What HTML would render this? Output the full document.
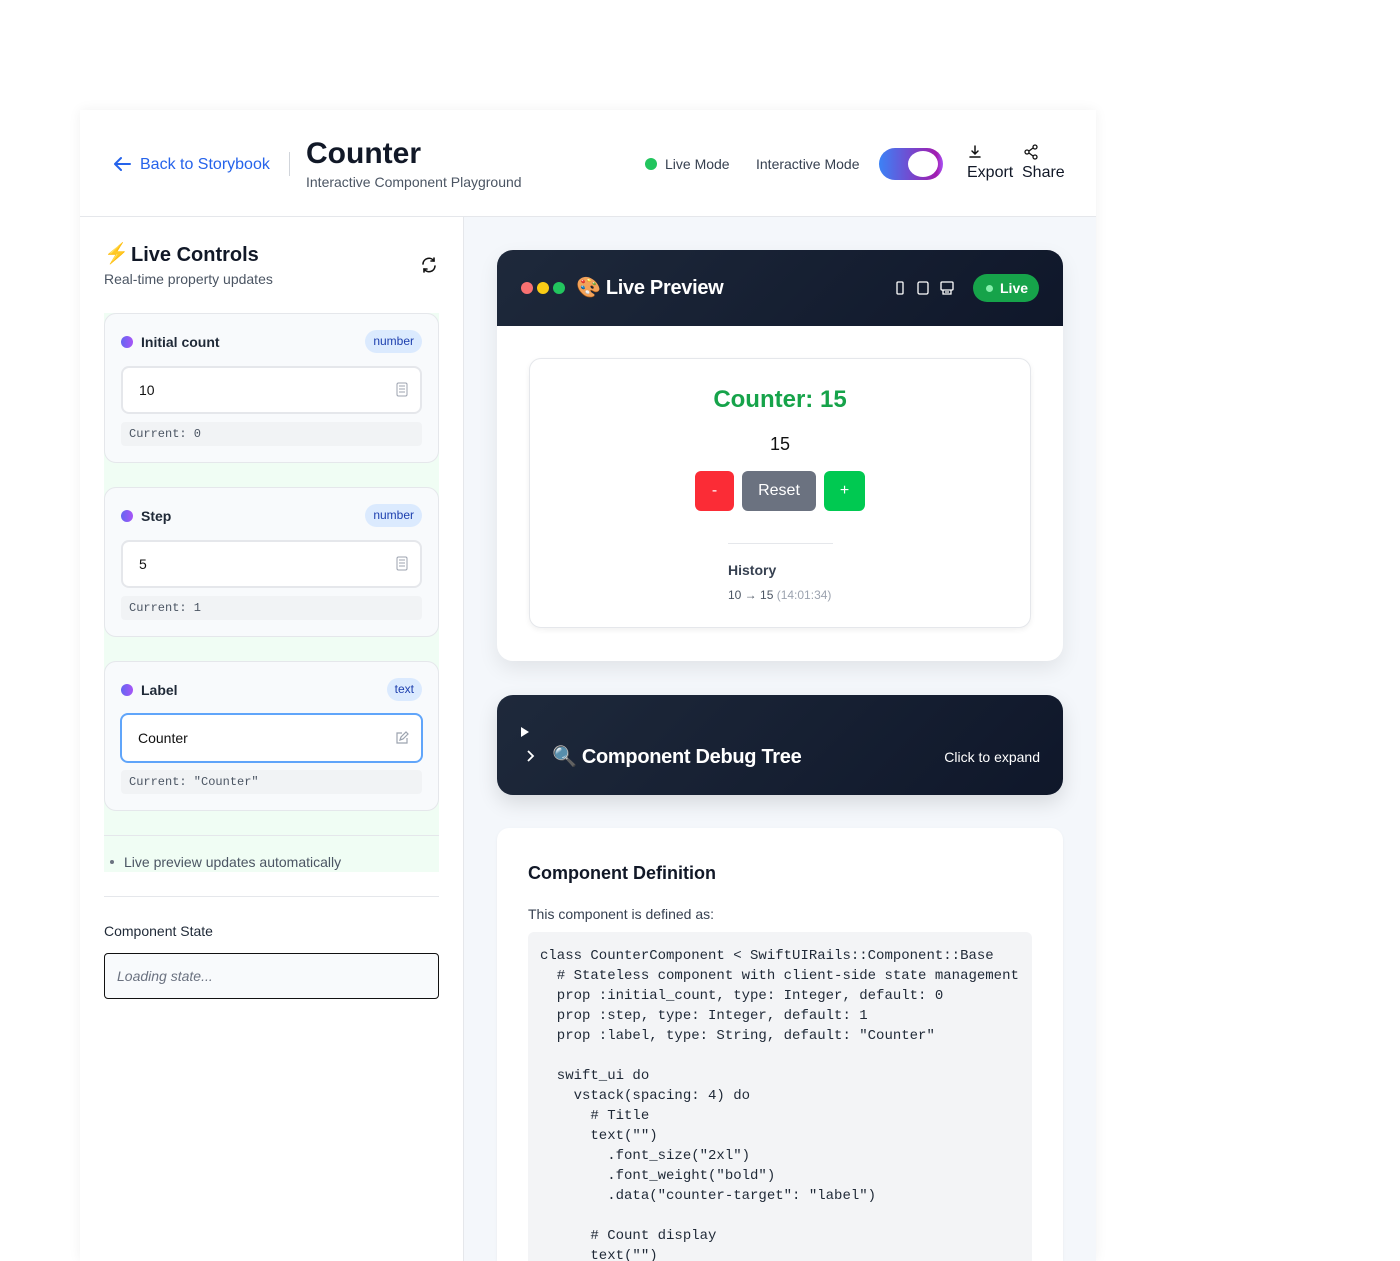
<!DOCTYPE html>
<html style="height:1261px;overflow:hidden"><head><meta charset="utf-8"><style>
*{box-sizing:border-box;margin:0;padding:0}
body{width:1400px;height:1261px;background:#fff;font-family:"Liberation Sans",sans-serif;position:relative;overflow:hidden;color:#111827}
.a{position:absolute}
.wrap{left:80px;top:110px;width:1016px;height:1151px;background:#fff;box-shadow:0 0 12px rgba(0,0,0,.06)}
.card{position:absolute;left:104px;width:335px;height:150px;background:#f8fafc;border:1px solid #e5e7eb;border-radius:12px}
.dot{position:absolute;left:16px;top:22px;width:12px;height:12px;border-radius:50%;background:linear-gradient(90deg,#6366f1,#a855f7)}
.lbl{position:absolute;left:36px;top:19px;font-size:14px;font-weight:bold;color:#1f2937}
.badge{position:absolute;right:16px;top:16px;height:23px;padding:0 8px;line-height:23px;border-radius:12px;background:#dbeafe;color:#1e40af;font-size:12px}
.inp{position:absolute;left:16px;top:52px;width:301px;height:48px;background:#fff;border:2px solid #e5e7eb;border-radius:8px;font-size:14px;line-height:44px;padding-left:16px;color:#111}
.cur{position:absolute;left:16px;top:108px;width:301px;height:24px;background:#f1f3f5;border-radius:4px;font-family:"Liberation Mono",monospace;font-size:12px;line-height:24px;padding-left:8px;color:#4b5563}
pre{font-family:"Liberation Mono",monospace;font-size:14px;line-height:20px;color:#1f2937}
</style></head><body>
<div class="a wrap"></div>
<div class="a" style="left:80px;top:216px;width:1016px;height:1px;background:#e5e7eb"></div>
<svg class="a" style="left:112px;top:155px" width="20" height="18" viewBox="0 0 20 18"><path d="M18 9H3M9 3L3 9l6 6" fill="none" stroke="#2563eb" stroke-width="2" stroke-linecap="round" stroke-linejoin="round"/></svg>
<div class="a" style="left:140px;top:156px;font-size:16px;color:#2563eb">Back to Storybook</div>
<div class="a" style="left:289px;top:152px;width:1px;height:24px;background:#d1d5db"></div>
<div class="a" style="left:306px;top:137px;font-size:30px;font-weight:bold;color:#111827">Counter</div>
<div class="a" style="left:306px;top:174px;font-size:14px;color:#4b5563">Interactive Component Playground</div>
<div class="a" style="left:645px;top:158px;width:12px;height:12px;border-radius:50%;background:#22c55e"></div>
<div class="a" style="left:665px;top:156px;font-size:14px;color:#374151">Live Mode</div>
<div class="a" style="left:756px;top:156px;font-size:14px;color:#374151">Interactive Mode</div>
<div class="a" style="left:879px;top:148px;width:64px;height:32px;border-radius:16px;background:linear-gradient(90deg,#3b82f6,#a21caf 90%,#a855f7)"></div>
<div class="a" style="left:908px;top:151px;width:30px;height:26px;border-radius:50%;background:#fff"></div>
<svg class="a" style="left:968px;top:144px" width="14" height="16" viewBox="0 0 14 16"><path d="M7 2v8M4 7l3 3 3-3M2 13h10" fill="none" stroke="#111" stroke-width="1.5" stroke-linecap="round"/></svg>
<div class="a" style="left:967px;top:164px;font-size:16px">Export</div>
<svg class="a" style="left:1023px;top:144px" width="16" height="16" viewBox="0 0 16 16"><g fill="none" stroke="#111" stroke-width="1.3"><circle cx="12" cy="3" r="2"/><circle cx="4" cy="8" r="2"/><circle cx="12" cy="13" r="2"/><path d="M6 7l4-3M6 9l4 3"/></g></svg>
<div class="a" style="left:1022px;top:164px;font-size:16px">Share</div>
<div class="a" style="left:463px;top:217px;width:1px;height:1044px;background:#e5e7eb"></div>
<div class="a" style="left:104px;top:241px;font-size:20px;color:#f59e0b">⚡</div>
<div class="a" style="left:131px;top:244px;font-size:20px;font-weight:bold">Live Controls</div>
<div class="a" style="left:104px;top:271px;font-size:14px;color:#4b5563">Real-time property updates</div>
<svg class="a" style="left:420px;top:256px" width="18" height="18" viewBox="0 0 18 18"><g fill="none" stroke="#111" stroke-width="1.6" stroke-linecap="round"><path d="M3 8a6 6 0 0 1 11-3M15 10a6 6 0 0 1-11 3"/><path d="M14 2v3h-3M4 16v-3h3"/></g></svg>
<div class="a" style="left:104px;top:313px;width:335px;height:559px;background:#f0fdf4"></div>
<div class="card" style="top:313px"><div class="dot"></div><div class="lbl" style="top:20px">Initial count</div><div class="badge">number</div><div class="inp">10</div><div class="cur">Current: 0</div></div>
<div class="card" style="top:487px"><div class="dot"></div><div class="lbl" style="top:20px">Step</div><div class="badge">number</div><div class="inp">5</div><div class="cur">Current: 1</div></div>
<div class="card" style="top:661px"><div class="dot"></div><div class="lbl" style="top:20px">Label</div><div class="badge">text</div><div class="inp" style="border-color:#60a5fa;left:15px;width:303px;top:51px;height:50px;line-height:46px">Counter</div><div class="cur">Current: "Counter"</div></div>
<svg class="a" style="left:396px;top:382px" width="12" height="15" viewBox="0 0 12 15"><rect x="1" y="1" width="10" height="13" rx="1.5" fill="none" stroke="#9ca3af"/><path d="M3 4h6M3 7h6M3 10h6" stroke="#9ca3af"/></svg>
<svg class="a" style="left:396px;top:556px" width="12" height="15" viewBox="0 0 12 15"><rect x="1" y="1" width="10" height="13" rx="1.5" fill="none" stroke="#9ca3af"/><path d="M3 4h6M3 7h6M3 10h6" stroke="#9ca3af"/></svg>
<svg class="a" style="left:395px;top:731px" width="14" height="14" viewBox="0 0 14 14"><path d="M7 2H2v10h10V7M5 9l1-3 5-5 2 2-5 5z" fill="none" stroke="#9ca3af" stroke-width="1.2"/></svg>
<div class="a" style="left:104px;top:835px;width:335px;height:1px;background:#e5e7eb"></div>
<div class="a" style="left:110px;top:860px;width:4px;height:4px;border-radius:50%;background:#6b7280"></div>
<div class="a" style="left:124px;top:854px;font-size:14px;color:#4b5563">Live preview updates automatically</div>
<div class="a" style="left:104px;top:896px;width:335px;height:1px;background:#e5e7eb"></div>
<div class="a" style="left:104px;top:923px;font-size:14px;color:#1f2937">Component State</div>
<div class="a" style="left:104px;top:953px;width:335px;height:46px;border:1px solid #111;border-radius:4px;background:#f8fafc;font-size:14px;font-style:italic;color:#6b7280;line-height:44px;padding-left:12px">Loading state...</div>
<div class="a" style="left:464px;top:217px;width:632px;height:1044px;background:#f4f7fb"></div>
<div class="a" style="left:497px;top:250px;width:566px;height:411px;background:#fff;border-radius:16px;box-shadow:0 8px 20px rgba(0,0,0,.08);overflow:hidden">
 <div style="height:76px;background:linear-gradient(135deg,#1e293b,#0f172a);position:relative">
  <div class="a" style="left:24px;top:32px;width:12px;height:12px;border-radius:50%;background:#f87171"></div>
  <div class="a" style="left:40px;top:32px;width:12px;height:12px;border-radius:50%;background:#facc15"></div>
  <div class="a" style="left:56px;top:32px;width:12px;height:12px;border-radius:50%;background:#22c55e"></div>
  <div class="a" style="left:79px;top:25px;font-size:20px;font-weight:bold;color:#fff;font-family:'Liberation Sans','Noto Sans CJK JP',sans-serif;letter-spacing:-0.3px">🎨 Live Preview</div>
  <svg class="a" style="left:398px;top:30px" width="64" height="16" viewBox="0 0 64 16"><g fill="none" stroke="#fff" stroke-width="1.3"><rect x="2" y="2" width="6" height="12" rx="1"/><rect x="23" y="2" width="10" height="12" rx="1.5"/><rect x="46" y="2" width="12" height="8" rx="1"/><path d="M48 10v4h8v-4M50 12h4"/></g></svg>
  <div class="a" style="left:476px;top:24px;width:66px;height:28px;border-radius:14px;background:#16a34a;color:#fff;font-size:14px;font-weight:bold;line-height:28px;padding-left:27px">Live</div>
  <div class="a" style="left:489px;top:35px;width:7px;height:7px;border-radius:50%;background:#86efac"></div>
 </div>
</div>
<div class="a" style="left:529px;top:358px;width:502px;height:270px;background:#fff;border:1px solid #e5e7eb;border-radius:12px;box-shadow:0 2px 6px rgba(0,0,0,.06)"></div>
<div class="a" style="left:529px;top:386px;width:502px;text-align:center;font-size:24px;font-weight:bold;color:#16a34a">Counter: 15</div>
<div class="a" style="left:529px;top:434px;width:502px;text-align:center;font-size:18px;color:#111">15</div>
<div class="a" style="left:695px;top:471px;width:39px;height:40px;border-radius:6px;background:#fb2c36;color:#fff;text-align:center;line-height:40px;font-size:16px">-</div>
<div class="a" style="left:742px;top:471px;width:74px;height:40px;border-radius:6px;background:#6b7280;color:#fff;text-align:center;line-height:40px;font-size:16px">Reset</div>
<div class="a" style="left:824px;top:471px;width:41px;height:40px;border-radius:6px;background:#00c951;color:#fff;text-align:center;line-height:40px;font-size:16px">+</div>
<div class="a" style="left:728px;top:543px;width:105px;height:1px;background:#e5e7eb"></div>
<div class="a" style="left:728px;top:562px;font-size:14px;font-weight:bold;color:#374151">History</div>
<div class="a" style="left:728px;top:588px;font-size:12px;color:#4b5563">10 → 15 <span style="color:#9ca3af">(14:01:34)</span></div>
<div class="a" style="left:497px;top:695px;width:566px;height:100px;border-radius:16px;background:linear-gradient(135deg,#1e293b,#0f172a);box-shadow:0 8px 20px rgba(0,0,0,.12)">
 <div class="a" style="left:24px;top:32px;width:0;height:0;border-left:8px solid #fff;border-top:5px solid transparent;border-bottom:5px solid transparent"></div>
 <svg class="a" style="left:29px;top:54px" width="10" height="14" viewBox="0 0 10 14"><path d="M2 2l5 5-5 5" fill="none" stroke="#fff" stroke-width="1.8"/></svg>
 <div class="a" style="left:55px;top:49px;font-size:20px;font-weight:bold;color:#fff;font-family:'Liberation Sans','Noto Sans CJK JP',sans-serif;letter-spacing:-0.3px">🔍 Component Debug Tree</div>
 <div class="a" style="right:23px;top:54px;font-size:14px;color:#fff">Click to expand</div>
</div>
<div class="a" style="left:497px;top:828px;width:566px;height:433px;background:#fff;border-radius:12px 12px 0 0;box-shadow:0 1px 3px rgba(0,0,0,.05)"></div>
<div class="a" style="left:528px;top:863px;font-size:18px;font-weight:bold;color:#111827">Component Definition</div>
<div class="a" style="left:528px;top:906px;font-size:14px;color:#374151">This component is defined as:</div>
<div class="a" style="left:528px;top:932px;width:504px;height:329px;background:#f3f4f6;border-radius:6px 6px 0 0;padding:14px 0 0 12px;overflow:hidden"><pre>class CounterComponent &lt; SwiftUIRails::Component::Base
  # Stateless component with client-side state management
  prop :initial_count, type: Integer, default: 0
  prop :step, type: Integer, default: 1
  prop :label, type: String, default: "Counter"

  swift_ui do
    vstack(spacing: 4) do
      # Title
      text("")
        .font_size("2xl")
        .font_weight("bold")
        .data("counter-target": "label")

      # Count display
      text("")</pre></div>
</body></html>
